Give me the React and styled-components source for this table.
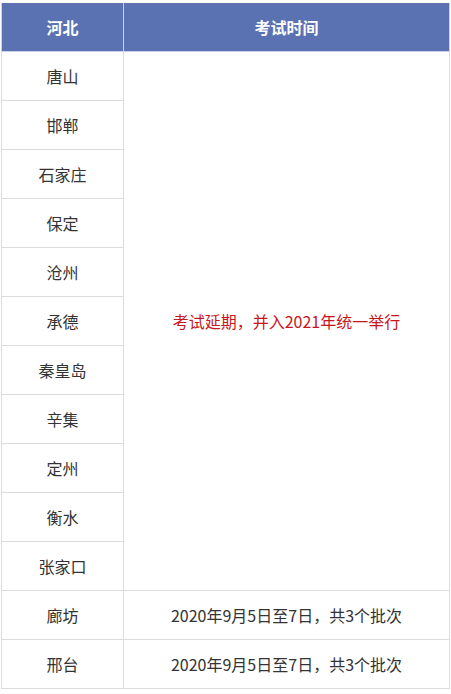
import React from "react";
import styled, { createGlobalStyle } from "styled-components";

const GlobalStyle = createGlobalStyle`
    html, body {
        margin: 0;
        padding: 0;
        background: #fff;
    }
    body {
        font-family: "Microsoft YaHei", "Noto Sans CJK SC", "Noto Sans", sans-serif;
    }
`;

const Wrap = styled.div`
    padding: 3px 0 0 1px;
`;

const Table = styled.table`
    width: 449px;
    border-collapse: collapse;
    table-layout: fixed;
    font-size: 16px;
    color: #333;
`;

const HeadCell = styled.th`
    height: 48px;
    padding: 0;
    background-color: #5b72b2;
    color: #fff;
    font-size: 16px;
    font-weight: bold;
    text-align: center;
    border: 1px solid #c9d1e6;
    border-top: none;
    width: ${(p) => p.$width || "auto"};
`;

const Cell = styled.td`
    height: 48px;
    padding: 0;
    text-align: center;
    border: 1px solid #dcdcdc;
    color: ${(p) => (p.$red ? "#c8161d" : "#333")};
`;

const cities = [
    "唐山", "邯郸", "石家庄", "保定", "沧州", "承德",
    "秦皇岛", "辛集", "定州", "衡水", "张家口",
];

const scheduled = ["廊坊", "邢台"];

const App = () => {
    return (
        <Wrap>
            <GlobalStyle />
            <Table>
                <thead>
                    <tr>
                        <HeadCell $width="121px">河北</HeadCell>
                        <HeadCell>考试时间</HeadCell>
                    </tr>
                </thead>
                <tbody>
                    {cities.map((city, index) => (
                        <tr key={city}>
                            <Cell>{city}</Cell>
                            {index === 0 && (
                                <Cell $red rowSpan={cities.length}>
                                    考试延期，并入2021年统一举行
                                </Cell>
                            )}
                        </tr>
                    ))}
                    {scheduled.map((city) => (
                        <tr key={city}>
                            <Cell>{city}</Cell>
                            <Cell>2020年9月5日至7日，共3个批次</Cell>
                        </tr>
                    ))}
                </tbody>
            </Table>
        </Wrap>
    );
};

export default App;
